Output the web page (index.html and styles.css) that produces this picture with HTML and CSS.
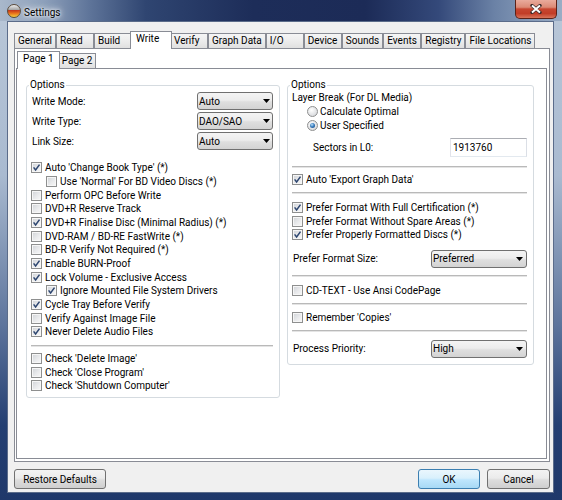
FILE: index.html
```html
<!DOCTYPE html>
<html>
<head>
<meta charset="utf-8">
<title>Settings</title>
<link rel="stylesheet" href="styles.css">
</head>
<body>
<div class="window">
  <div class="titlebar">
    <span class="appicon"></span>
    <span class="title">Settings</span>
    <span class="close"><svg width="12" height="10" viewBox="0 0 12 10"><path d="M2 1.5l8 7M10 1.5l-8 7" stroke="#3b2a2a" stroke-width="3.4" stroke-linecap="round"/><path d="M2 1.5l8 7M10 1.5l-8 7" stroke="#fff" stroke-width="2"/></svg></span>
  </div>
  <div class="client">
    <div class="tabs">
      <div class="tab">General</div>
      <div class="tab">Read</div>
      <div class="tab">Build</div>
      <div class="tab sel">Write</div>
      <div class="tab">Verify</div>
      <div class="tab">Graph Data</div>
      <div class="tab">I/O</div>
      <div class="tab">Device</div>
      <div class="tab">Sounds</div>
      <div class="tab">Events</div>
      <div class="tab">Registry</div>
      <div class="tab">File Locations</div>
    </div>
    <div class="tabpanel">
      <div class="tabs sub">
        <div class="tab sel">Page 1</div>
        <div class="tab">Page 2</div>
      </div>
      <div class="page">
        <fieldset class="group g-left">
          <legend>Options</legend>
          <div class="field first"><span>Write Mode:</span><div class="dd dd-s"><span>Auto</span><svg width="7" height="4" viewBox="0 0 7 4"><path d="M0 0h7L3.5 4z"/></svg></div></div>
          <div class="field"><span>Write Type:</span><div class="dd dd-s"><span>DAO/SAO</span><svg width="7" height="4" viewBox="0 0 7 4"><path d="M0 0h7L3.5 4z"/></svg></div></div>
          <div class="field"><span>Link Size:</span><div class="dd dd-s"><span>Auto</span><svg width="7" height="4" viewBox="0 0 7 4"><path d="M0 0h7L3.5 4z"/></svg></div></div>
          <div class="list gap11">
            <div class="chk"><span class="cb"><svg viewBox="0 0 9 9"><path d="M1.6 4.4l2 2.6 3.9-5.4"/></svg></span>Auto 'Change Book Type' (*)</div>
            <div class="chk ind"><span class="cb"></span>Use 'Normal' For BD Video Discs (*)</div>
            <div class="chk"><span class="cb"></span>Perform OPC Before Write</div>
            <div class="chk"><span class="cb"></span>DVD+R Reserve Track</div>
            <div class="chk"><span class="cb"><svg viewBox="0 0 9 9"><path d="M1.6 4.4l2 2.6 3.9-5.4"/></svg></span>DVD+R Finalise Disc (Minimal Radius) (*)</div>
            <div class="chk"><span class="cb"></span>DVD-RAM / BD-RE FastWrite (*)</div>
            <div class="chk"><span class="cb"></span>BD-R Verify Not Required (*)</div>
            <div class="chk"><span class="cb"><svg viewBox="0 0 9 9"><path d="M1.6 4.4l2 2.6 3.9-5.4"/></svg></span>Enable BURN-Proof</div>
            <div class="chk"><span class="cb"><svg viewBox="0 0 9 9"><path d="M1.6 4.4l2 2.6 3.9-5.4"/></svg></span>Lock Volume - Exclusive Access</div>
            <div class="chk ind"><span class="cb"><svg viewBox="0 0 9 9"><path d="M1.6 4.4l2 2.6 3.9-5.4"/></svg></span>Ignore Mounted File System Drivers</div>
            <div class="chk"><span class="cb"><svg viewBox="0 0 9 9"><path d="M1.6 4.4l2 2.6 3.9-5.4"/></svg></span>Cycle Tray Before Verify</div>
            <div class="chk"><span class="cb"></span>Verify Against Image File</div>
            <div class="chk"><span class="cb"><svg viewBox="0 0 9 9"><path d="M1.6 4.4l2 2.6 3.9-5.4"/></svg></span>Never Delete Audio Files</div>
          </div>
          <div class="sep gap6"></div>
          <div class="list gap5">
            <div class="chk"><span class="cb"></span>Check 'Delete Image'</div>
            <div class="chk"><span class="cb"></span>Check 'Close Program'</div>
            <div class="chk"><span class="cb"></span>Check 'Shutdown Computer'</div>
          </div>
        </fieldset>
        <fieldset class="group g-right">
          <legend>Options</legend>
          <div class="line">Layer Break (For DL Media)</div>
          <div class="rad"><span class="rb"></span>Calculate Optimal</div>
          <div class="rad"><span class="rb on"></span>User Specified</div>
          <div class="sectors gap7"><span>Sectors in L0:</span><div class="txt">1913760</div></div>
          <div class="sep gap9"></div>
          <div class="chk gap5"><span class="cb"><svg viewBox="0 0 9 9"><path d="M1.6 4.4l2 2.6 3.9-5.4"/></svg></span>Auto 'Export Graph Data'</div>
          <div class="sep gap5"></div>
          <div class="list gap7">
            <div class="chk"><span class="cb"><svg viewBox="0 0 9 9"><path d="M1.6 4.4l2 2.6 3.9-5.4"/></svg></span>Prefer Format With Full Certification (*)</div>
            <div class="chk"><span class="cb"></span>Prefer Format Without Spare Areas (*)</div>
            <div class="chk"><span class="cb"><svg viewBox="0 0 9 9"><path d="M1.6 4.4l2 2.6 3.9-5.4"/></svg></span>Prefer Properly Formatted Discs (*)</div>
          </div>
          <div class="field gap8"><span>Prefer Format Size:</span><div class="dd dd-w"><span>Preferred</span><svg width="7" height="4" viewBox="0 0 7 4"><path d="M0 0h7L3.5 4z"/></svg></div></div>
          <div class="sep gap7"></div>
          <div class="chk gap7"><span class="cb"></span>CD-TEXT - Use Ansi CodePage</div>
          <div class="sep gap6"></div>
          <div class="chk gap5"><span class="cb"></span>Remember 'Copies'</div>
          <div class="sep gap6"></div>
          <div class="field gap8"><span>Process Priority:</span><div class="dd dd-w"><span>High</span><svg width="7" height="4" viewBox="0 0 7 4"><path d="M0 0h7L3.5 4z"/></svg></div></div>
        </fieldset>
      </div>
    </div>
    <div class="buttons">
      <div class="btn restore">Restore Defaults</div>
      <div class="btn ok">OK</div>
      <div class="btn cancel">Cancel</div>
    </div>
  </div>
</div>
</body>
</html>
```

FILE: styles.css
```css
* { box-sizing: border-box; }
html, body { margin: 0; padding: 0; }
body {
  width: 562px;
  height: 500px;
  overflow: hidden;
  font-family: Roboto, "Liberation Sans", Arial, sans-serif;
  font-size: 10px;
  color: #000;
  background: #233a6b;
}
.window {
  width: 562px;
  height: 500px;
  display: flex;
  flex-direction: column;
  background:
    linear-gradient(90deg, rgba(30,50,100,0) 0, rgba(30,50,100,0) 20px, rgba(30,50,100,0) 542px),
    linear-gradient(180deg, #b9c7d8 0%, #a9bad0 35%, #5d749c 65%, #243f72 85%, #1f386a 100%);
}
.titlebar {
  height: 21px;
  flex: none;
  display: flex;
  align-items: flex-start;
  padding: 0 5px 0 7px;
  background: linear-gradient(90deg, #a9b8cb 0%, #8c9fba 8%, #5e7499 16%, #2f4571 26%, #1d2d59 45%, #1c2b57 65%, #34497a 78%, #6b82a6 88%, #9aadc5 100%);
}
.appicon {
  width: 14px;
  height: 14px;
  margin-top: 4px;
  border-radius: 50%;
  flex: none;
  border: 1px solid #5a4a3a;
  background: linear-gradient(180deg, #eeeeee 0%, #a8a8a8 38%, #c7391a 46%, #e86f1c 68%, #f6cf3d 100%);
}
.title {
  margin-left: 3px;
  margin-top: 6px;
  line-height: 14px;
  font-size: 10px;
  color: #000;
  text-shadow: 0 0 6px #fff, 0 0 3px #fff, 0 0 10px rgba(255,255,255,.8);
}
.close {
  margin-left: auto;
  width: 42px;
  height: 19px;
  flex: none;
  display: flex;
  align-items: center;
  justify-content: center;
  border: 1px solid #5b2218;
  border-top: none;
  border-radius: 0 0 5px 5px;
  background: linear-gradient(180deg, #e9ab9c 0%, #dc8a76 40%, #c74630 50%, #c23d27 75%, #d9745a 100%);
}
.client {
  flex: 1;
  margin: 0 8px 7px 7px;
  border: 1px solid #5b6c8a;
  background: #f0f0f0;
  display: flex;
  flex-direction: column;
  padding: 9px 3px 0 6px;
}
.tabs {
  display: flex;
  align-items: flex-end;
  height: 18px;
  margin-bottom: -1px;
  position: relative;
  z-index: 1;
  flex: none;
}
.tab {
  height: 15px;
  margin-bottom: 1px;
  min-width: 38px;
  padding: 0 3px;
  border: 1px solid #898c95;
  border-bottom: none;
  background: linear-gradient(180deg, #f5f5f5 0%, #ececec 50%, #e0e0e0 100%);
  line-height: 14px;
  white-space: nowrap;
}
.tab.sel {
  height: 18px;
  margin: 0 -2px;
  min-width: 42px;
  padding: 0 5px;
  background: #fff;
  position: relative;
  z-index: 2;
}
.tabs.sub { padding-left: 3px; }
.tabpanel {
  flex: 1;
  border: 1px solid #898c95;
  background: #fff;
  padding: 2px 2px 2px 1px;
  display: flex;
  flex-direction: column;
}
.page {
  flex: 1;
  border: 1px solid #898c95;
  background: #fff;
  display: flex;
  align-items: flex-start;
  gap: 7px;
  padding: 10px 11px 0 9px;
}
.group {
  margin: 0;
  min-width: 0;
  border: 1px solid #d5dbe0;
  border-radius: 3px;
  padding: 0 6px 4px 4px;
  display: flex;
  flex-direction: column;
}
.group legend {
  padding: 0 1px;
  margin-left: -2px;
  line-height: 12px;
  font-size: 10px;
}
.g-left { width: 254px; }
.g-right { width: 247px; padding-bottom: 6px; }
.field {
  display: flex;
  align-items: center;
  justify-content: space-between;
  height: 18px;
  margin-top: 2px;
  padding-left: 1px;
}
.field.first { margin-top: 1px; }
.dd {
  height: 18px;
  border: 1px solid #707070;
  border-radius: 3px;
  background: linear-gradient(180deg, #f4f4f4 0%, #ececec 45%, #dfdfdf 55%, #d3d3d3 100%);
  display: flex;
  align-items: center;
  justify-content: space-between;
  padding: 0 2px 0 1px;
}
.dd svg path { fill: #000; }
.dd-s { width: 76px; }
.dd-w { width: 96px; padding-right: 3px; }
.list { display: flex; flex-direction: column; }
.chk {
  display: flex;
  align-items: center;
  gap: 3px;
  height: 13.66px;
  white-space: nowrap;
}
.chk.ind { padding-left: 15px; }
.cb {
  width: 11px;
  height: 11px;
  flex: none;
  border: 1px solid #8e8f8f;
  background: linear-gradient(135deg, #cfd2d6 0%, #e9eaec 55%, #f8f8f8 100%);
  box-shadow: inset 0 0 0 1px #f6f6f6;
  display: flex;
}
.cb svg { width: 9px; height: 9px; }
.cb svg path { fill: none; stroke: #2d4670; stroke-width: 1.5; }
.line { height: 13.66px; display: flex; align-items: center; }
.rad {
  display: flex;
  align-items: center;
  gap: 2px;
  height: 13.66px;
  padding-left: 15px;
}
.rb {
  width: 11px;
  height: 11px;
  flex: none;
  border-radius: 50%;
  border: 1px solid #8e8f8f;
  background: radial-gradient(circle at 40% 35%, #ffffff 0%, #e6e7e9 50%, #cfd2d6 100%);
  display: flex;
  align-items: center;
  justify-content: center;
}
.rb.on::after {
  content: "";
  width: 5px;
  height: 5px;
  border-radius: 50%;
  background: radial-gradient(circle at 40% 35%, #bfe3fb 0%, #3b7fc0 45%, #12407a 100%);
}
.sectors {
  display: flex;
  align-items: center;
  justify-content: space-between;
  height: 18px;
  padding-left: 21px;
}
.txt {
  width: 77px;
  height: 19px;
  border: 1px solid #abadb3;
  border-color: #abadb3 #dbdfe6 #e3e9ef #e2e3ea;
  background: #fff;
  padding-left: 2px;
  display: flex;
  align-items: center;
}
.sep {
  height: 2px;
  flex: none;
  border-top: 1px solid #b9b9b9;
  border-bottom: 1px solid #e4e4e4;
}
.gap5 { margin-top: 5px; }
.gap6 { margin-top: 6px; }
.gap7 { margin-top: 7px; }
.gap8 { margin-top: 8px; }
.gap9 { margin-top: 9px; }
.gap11 { margin-top: 11px; }
.buttons {
  flex: none;
  display: flex;
  height: 20px;
  margin: 7px 0 3px;
}
.btn {
  height: 20px;
  border: 1px solid #707070;
  border-radius: 3px;
  background: linear-gradient(180deg, #f3f3f3 0%, #ebebeb 45%, #dddddd 55%, #cfcfcf 100%);
  display: flex;
  align-items: center;
  justify-content: center;
  white-space: nowrap;
}
.restore { width: 92px; }
.ok {
  width: 62px;
  margin-left: auto;
  border-color: #3c7fb1;
  background: linear-gradient(180deg, #eaf6fd 0%, #d9f0fc 45%, #bee6fd 55%, #a7d9f5 100%);
}
.cancel { width: 63px; margin-left: 7px; }
```
